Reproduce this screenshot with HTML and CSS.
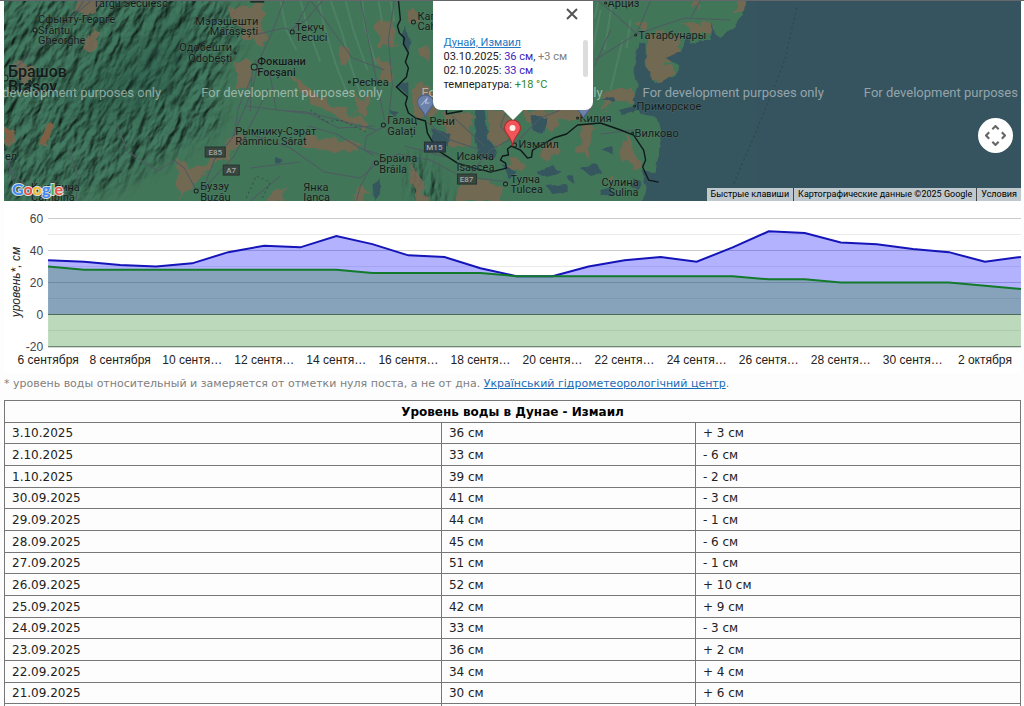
FILE: index.html
```html
<!DOCTYPE html>
<html lang="ru">
<head>
<meta charset="utf-8">
<title>Уровень воды в Дунае - Измаил</title>
<link rel="stylesheet" href="styles.css">
</head>
<body>
<main class="page">
  <section class="map" aria-label="Карта">
    <svg class="map-canvas" viewBox="4 1 1016 200" preserveAspectRatio="xMidYMid slice">
      <defs>
        <filter id="relief" x="-20%" y="-20%" width="140%" height="140%" color-interpolation-filters="sRGB">
          <feTurbulence type="fractalNoise" baseFrequency="0.11 0.045" numOctaves="4" seed="8" result="n"/>
          <feDiffuseLighting in="n" surfaceScale="4" diffuseConstant="1" lighting-color="#437c62" result="l"><feDistantLight azimuth="200" elevation="58"/></feDiffuseLighting>
          <feGaussianBlur in="SourceAlpha" stdDeviation="9" result="m"/>
          <feComposite in="l" in2="m" operator="in"/>
        </filter>
        <filter id="rough" x="-5%" y="-5%" width="110%" height="110%">
          <feTurbulence type="fractalNoise" baseFrequency="0.09" numOctaves="3" seed="4"/>
          <feDisplacementMap in="SourceGraphic" scale="13" xChannelSelector="R" yChannelSelector="G"/>
        </filter>
        <filter id="coast" x="-5%" y="-5%" width="110%" height="110%">
          <feTurbulence type="fractalNoise" baseFrequency="0.1" numOctaves="2" seed="2"/>
          <feDisplacementMap in="SourceGraphic" scale="5" xChannelSelector="R" yChannelSelector="G"/>
        </filter>
        <filter id="soft" x="-20%" y="-20%" width="140%" height="140%"><feGaussianBlur stdDeviation="12"/></filter>
      </defs>
      <rect class="land" x="4" y="0" width="1016" height="202"/>
      <g class="ridges">
        <path d="M300 0l8 30 12 32M318 0l6 26 12 40 12 30M330 0l12 34 8 30 10 30M345 0l8 30 14 40M362 0l2 25 12 40M280 0l6 30 10 20M378 0l4 24M390 0l4 22M600 10l-10 50 -6 35M612 0l-8 50M622 40l-12 50M630 20l-4 28M598 0l-4 18"/>
      </g>
      <g transform="rotate(28 110 100)">
        <path filter="url(#relief)" d="M-60 70L-20-60H110L196-30 200 40 222 70 190 122 160 170 130 200 40 250H-20Z"/>
      </g>
      <path filter="url(#relief)" d="M408 158L424 162 438 184 450 205H414Z"/>
      <path class="shade" filter="url(#soft)" d="M110 60L190 10 180 90 130 120 60 110Z"/>
      <g class="field" filter="url(#rough)">
        <path d="M78 0H106L88 16 72 10ZM92 28L100 32 94 50 82 52ZM14 62L34 66 32 80 16 78ZM48 122L54 126 44 146 40 144ZM4 126L14 128 12 146 4 142ZM226 8L262 4 266 46 244 38ZM234 62L254 60 250 84 238 90ZM176 160L190 168 210 162 232 138 240 134 242 142 222 162 204 172 192 190 178 198ZM376 22L394 20 396 46 378 46ZM341 46L350 48 348 66 340 64ZM378 58L392 64 390 82 381 76ZM286 74L304 84 330 104 352 112 368 124 362 130 338 118 310 102ZM306 134L332 140 360 142 356 150 322 152 300 148ZM354 94L370 100 364 118 356 112ZM276 190L286 188 280 201 266 201ZM358 188L368 192 362 201 354 200ZM412 84L432 86 438 112 420 118 412 106ZM442 112L472 114 468 148 448 146ZM486 110L508 112 510 136 500 148 489 140ZM524 112L592 108 574 120 560 120 552 134 544 126 532 132ZM540 148L554 142 558 152 546 162 538 158ZM582 124L594 128 588 158 578 152ZM624 138L634 148 640 168 626 164 618 156ZM602 92L632 86 634 104 616 100 602 110ZM646 32L678 34 682 52 664 62 676 72 660 84 648 76ZM682 22L712 24 710 34 692 34ZM692 0H700L698 10 691 9ZM736 0H748L740 14 733 14ZM636 22L646 22 644 32 637 30ZM512 158L526 164 522 174 508 170ZM462 182L486 180 504 188 500 201H456ZM410 164L418 174 428 201H418L410 182ZM606 178L616 176 610 188ZM404 10L416 8 420 20 410 28ZM418 48L428 48 428 60 420 58Z"/>
      </g>
      <g class="hill"><path d="M50 122l4 3-5 12-8 9-1-6zM6 128l7 4-4 12-4-4z"/></g>
      <path class="water" filter="url(#coast)" d="M750-10L742 14 734 26 720 38 714 34 712 22 710 40 700 40 690 44 688 36 680 52 665 58 679 66 676 74 660 83 651 79 645 62 645 43 638 43 633 70 637 84 633 100 640 114 657 117 661 133 655 173 641 170 645 186 640 212H1040V-10Z"/>
      <rect class="sea" x="756" y="0" width="264" height="202"/>
      <g class="water" filter="url(#coast)">
        <path d="M476 108L484 109 488 140 497 152 492 161 478 158 474 140ZM431 128L450 134 448 146 432 144ZM530 116L547 118 542 134 532 130ZM404 24L410 40 408 52 403 44ZM396 86L408 82 408 96ZM372 186L379 178 380 192 374 201ZM274 157L284 160 276 164ZM502 164l14 8-8 8zM536 172l18-6 6 6-14 4zM546 186l20-2 0 8-14 2zM580 168l14-4 8 8-12 4zM600 190l8-2 6 6-14 2zM618 110l16-4 4 4-16 4zM566 176l6-2 2 10-6-4zM600 150l12-4 0 8zM634 178l8 4-4 8-8-4zM602 100l10-4 2 4zM388 110l10 2-4 6z"/>
      </g>
      <g class="roads">
        <path d="M4 78L38 48 58 32 78 10 84 0M70 150L78 178 76 201M8 160L14 176 34 190M92 0L78 12M116 125L128 152 158 171 174 160 184 168 196 190 204 186 214 160 232 138 242 114 252 90 258 62 272 32 284 0M252 68L250 112M258 34L284 28 290 30 306 20 326 -4M292 32L310 0M254 60L270 76 276 110 306 112 330 118 376 130M234 136L238 108 252 76M204 188L234 156 258 110 268 88M246 106L310 114 338 128 374 126M308 126L336 134 374 156M250 134L290 148 324 172 360 178 376 164M388 122L392 84 388 40 394 0M360 0L372 60 384 120M310 0L352 58 384 70M374 160L360 186 356 201M376 164L398 154 430 160 460 176 508 182M404 146L450 158M388 124L366 136 364 150 378 154M426 122L450 140 480 150M452 116L484 146M506 110L500 126 512 140M514 144L540 118 560 110M594 60L636 34 650 0M636 34L614 14 596 0M636 34L684 18 730 20M600 134L634 130M470 174L490 150 512 138M594 66L610 30M700 0L690 18M4 150L14 184M280 176L250 201M250 168L300 162"/>
      </g>
      <g class="border-minor"><path d="M310 110L326 122 340 120 366 132M246 198L256 176 270 182 262 198M796 8L784 60 756 130 732 186"/></g>
      <path class="border" d="M398 0L400 20 397 26 399 33 404 38 403 44 408 53 405 62 408 68 406 77 396 87 407 97 405 104 408 113 415 118 425 121 427 133 437 150 457 163 474 168 490 172 506 168 505 163 500 160 502 156 508 155 507 149 511 146 520 150 527 158 531 157 532 150 553 138 566 134 577 125 600 123 620 130 633 135 643 150 645 160 642 167 648 180 658 182M446 110V114L462 111M250 2H264"/>
      <g class="shields">
        <rect x="205" y="147" width="20" height="10"/><rect x="223" y="165" width="16" height="10"/><rect x="457" y="174" width="19" height="10"/><rect class="blue" x="424" y="142" width="21" height="10"/>
        <text x="215" y="155">E85</text><text x="231" y="173">A7</text><text x="466" y="182">E87</text><text x="434" y="150">M15</text>
      </g>
      <g class="dots"><circle cx="35" cy="30" r="2"/><circle cx="254" cy="67" r="3"/><circle cx="292" cy="32" r="2"/><circle cx="413" cy="22" r="2"/><circle cx="383" cy="125" r="2"/><circle cx="376" cy="163" r="2"/><circle cx="196" cy="191" r="2"/><circle cx="505" cy="184" r="2"/><circle cx="514" cy="145" r="2"/><circle cx="605" cy="3" r="1"/><circle cx="635" cy="35" r="1"/><circle cx="634" cy="106" r="1"/><circle cx="632" cy="133" r="1"/><circle cx="577" cy="118" r="1"/><circle cx="349" cy="82" r="1"/><circle cx="235" cy="53" r="1"/><circle cx="5" cy="78" r="3"/></g>
      <g class="places">
        <text x="93" y="7">Târgu Secuiesc</text>
        <text x="38" y="23">Сфынту-Георге</text><text x="38" y="34">Sfântu</text><text x="38" y="44">Gheorghe</text>
        <text class="end" x="258" y="25">Мэрэшешти</text><text class="end" x="258" y="35">Mărășești</text>
        <text class="end" x="232" y="51">Одобешти</text><text class="end" x="232" y="62">Odobești</text>
        <text class="city" x="8" y="77">Брашов</text><text class="city" x="8" y="92">Brașov</text>
        <text x="5" y="160">ел</text><text x="31" y="191">Кымпина</text><text x="31" y="201">Câmpina</text>
        <text x="295" y="31">Текуч</text><text x="295" y="41">Tecuci</text>
        <text class="town" x="257" y="65">Фокшани</text><text class="town" x="257" y="76">Focșani</text>
        <text x="352" y="86">Pechea</text>
        <text x="235" y="135">Рымнику-Сэрат</text><text x="235" y="145">Râmnicu Sărat</text>
        <text x="200" y="190">Бузэу</text><text x="200" y="201">Buzău</text>
        <text x="303" y="191">Янка</text><text x="303" y="201">Ianca</text>
        <text x="387" y="124">Галац</text><text x="387" y="135">Galați</text>
        <text x="379" y="162">Браила</text><text x="379" y="173">Brăila</text>
        <text x="417" y="20">Кагул</text><text x="417" y="30">Cahul</text>
        <text x="429" y="125">Рени</text><text x="456" y="160">Исакча</text><text x="456" y="171">Isaccea</text>
        <text x="510" y="183">Тулча</text><text x="510" y="193">Tulcea</text>
        <text x="518" y="148">Измаил</text><text x="579" y="122">Килия</text>
        <text x="607" y="7">Арциз</text><text x="638" y="39">Татарбунары</text><text x="636" y="110">Приморское</text><text x="634" y="137">Вилково</text>
        <text class="end" x="638" y="186">Сулина</text><text class="end" x="638" y="196">Sulina</text>
      </g>
      <g class="watermark"><text x="-20" y="97">For development purposes only</text><text x="201" y="97">For development purposes only</text><text x="421" y="97">For development purposes only</text><text x="642" y="97">For development purposes only</text><text x="863" y="97">For development purposes only</text></g>
      <g class="pin-blue"><path d="M425 117C423 109 417 108 417 102A8 7 0 0 1 433 102C433 108 427 109 425 117Z"/><path d="M583 118C581 113 577 112 576 106H590C589 112 585 113 583 118Z"/></g>
      <path class="bolt" d="M421 105L427 98 425 103 429 103"/>
      <path class="pin-red" d="M512 146C511 136 504 134 504 128A8 8 0 0 1 520 128C520 134 513 136 512 146Z"/>
      <circle class="pin-eye" cx="512" cy="128" r="3"/>
      <text class="logo" x="12" y="195"><tspan class="g-blue">G</tspan><tspan class="g-red">o</tspan><tspan class="g-yellow">o</tspan><tspan class="g-blue">g</tspan><tspan class="g-green">l</tspan><tspan class="g-red">e</tspan></text>
    </svg>
    <div class="info">
      <button class="info-close" type="button" aria-label="Закрыть"><svg viewBox="0 0 12 12"><path d="M1 1L11 11M11 1L1 11"/></svg></button>
      <div class="info-text">
        <a href="#izmail">Дунай, Измаил</a>
        <div>03.10.2025: <span class="level">36 см</span>, <span class="delta">+3 см</span></div>
        <div>02.10.2025: <span class="level">33 см</span></div>
        <div>температура: <span class="temp">+18 °C</span></div>
      </div>
      <span class="info-scroll"></span>
    </div>
    <button class="pan" type="button" aria-label="Управление камерой"><svg viewBox="0 0 20 20"><path d="M7 4L10 1 13 4M7 16L10 19 13 16M4 7L1 10 4 13M16 7L19 10 16 13"/></svg></button>
    <div class="credits"><button type="button">Быстрые клавиши</button><span>Картографические данные ©2025 Google</span><a href="#terms">Условия</a></div>
  </section>

  <svg class="chart" viewBox="4 201 1016 172" role="img" aria-label="График уровня воды">
    <path class="grid-minor" d="M48 234.500H1020M48 266.500H1020M48 298.500H1020M48 330.500H1020"/>
    <path class="grid-major" d="M48 218.500H1020M48 250.500H1020M48 282.500H1020"/>
    <path class="area-blue" d="M48 314.500V260.100L84 261.700 120 264.900 156 266.500 192 263.300 228 252.100 264 245.700 300 247.300 336 236.100 372 244.100 408 255.300 444 256.900 480 268.100 516 276.100 552 276.100 588 266.500 624 260.100 660 256.900 696 261.700 732 247.300 768 231.300 804 232.900 840 242.500 876 244.100 912 248.900 948 252.100 984 261.700 1020 256.900V314.500Z"/>
    <path class="area-green" d="M48 346.500V266.500L84 269.700H336L372 272.900H480L516 276.100H732L768 279.300H804L840 282.500H948L984 285.700 1020 288.900V346.500Z"/>
    <path class="axis" d="M48 314.500H1020M48 346.500H1020"/>
    <path class="line-blue" d="M48 260.100L84 261.700 120 264.900 156 266.500 192 263.300 228 252.100 264 245.700 300 247.300 336 236.100 372 244.100 408 255.300 444 256.900 480 268.100 516 276.100 552 276.100 588 266.500 624 260.100 660 256.900 696 261.700 732 247.300 768 231.300 804 232.900 840 242.500 876 244.100 912 248.900 948 252.100 984 261.700 1020 256.900"/>
    <path class="line-green" d="M48 266.500L84 269.700H336L372 272.900H480L516 276.100H732L768 279.300H804L840 282.500H948L984 285.700 1020 288.900"/>
    <g class="y-labels"><text x="43" y="223">60</text><text x="43" y="255">40</text><text x="43" y="287">20</text><text x="43" y="319">0</text><text x="43" y="351">-20</text></g>
    <text class="y-title" transform="translate(20 282) rotate(-90)">уровень*, см</text>
    <g class="x-labels"><text x="48" y="364">6 сентября</text><text x="120" y="364">8 сентября</text><text x="192" y="364">10 сентя…</text><text x="264" y="364">12 сентя…</text><text x="336" y="364">14 сентя…</text><text x="408" y="364">16 сентя…</text><text x="480" y="364">18 сентя…</text><text x="552" y="364">20 сентя…</text><text x="624" y="364">22 сентя…</text><text x="696" y="364">24 сентя…</text><text x="768" y="364">26 сентя…</text><text x="840" y="364">28 сентя…</text><text x="912" y="364">30 сентя…</text><text x="984" y="364">2 октября</text></g>
  </svg>

  <p class="note">* уровень воды относительный и замеряется от отметки нуля поста, а не от дна. <a href="#center">Український гідрометеорологічний центр</a>.</p>

  <table class="levels" id="izmail">
    <colgroup><col class="col-date"><col class="col-level"><col></colgroup>
    <thead><tr><th colspan="3">Уровень воды в Дунае - Измаил</th></tr></thead>
    <tbody>
      <tr><td>3.10.2025</td><td>36 см</td><td>+ 3 см</td></tr>
      <tr><td>2.10.2025</td><td>33 см</td><td>- 6 см</td></tr>
      <tr><td>1.10.2025</td><td>39 см</td><td>- 2 см</td></tr>
      <tr><td>30.09.2025</td><td>41 см</td><td>- 3 см</td></tr>
      <tr><td>29.09.2025</td><td>44 см</td><td>- 1 см</td></tr>
      <tr><td>28.09.2025</td><td>45 см</td><td>- 6 см</td></tr>
      <tr><td>27.09.2025</td><td>51 см</td><td>- 1 см</td></tr>
      <tr><td>26.09.2025</td><td>52 см</td><td>+ 10 см</td></tr>
      <tr><td>25.09.2025</td><td>42 см</td><td>+ 9 см</td></tr>
      <tr><td>24.09.2025</td><td>33 см</td><td>- 3 см</td></tr>
      <tr><td>23.09.2025</td><td>36 см</td><td>+ 2 см</td></tr>
      <tr><td>22.09.2025</td><td>34 см</td><td>+ 4 см</td></tr>
      <tr><td>21.09.2025</td><td>30 см</td><td>+ 6 см</td></tr>
      <tr><td></td><td></td><td></td></tr>
    </tbody>
  </table>
</main>
</body>
</html>
```
FILE: styles.css
```css
* { box-sizing: border-box; }
body { margin: 0; border-top: 1px solid #64666a; background: #fdfdfd; color: #222; font-family: "DejaVu Sans", Verdana, sans-serif; font-size: 12px; }
.page { padding: 0 3px 0 4px; }

.map { position: relative; height: 200px; overflow: hidden; font-family: Roboto, sans-serif; }
.map-canvas { display: block; width: 100%; height: 100%; }
.land { fill: #427659; }
.ridges { fill: none; stroke: #5a8c70; stroke-width: 2; opacity: .5; }
.shade { fill: #1f4a3c; opacity: .3; }
.field { fill: #786852; opacity: .9; }
.hill { fill: #805f42; }
.water, .sea { fill: #36545f; }
.roads { fill: none; stroke: #4e5b62; stroke-width: 1; }
.border-minor { fill: none; stroke: #263c39; stroke-width: 1; stroke-dasharray: 2 3; opacity: .6; }
.border { fill: none; stroke: #10191a; stroke-width: 1.4; stroke-linejoin: round; }
.shields rect { fill: #3a4740; stroke: #28342e; }
.shields .blue { fill: #2e4254; }
.shields text { fill: #a3a8a3; font-size: 8px; font-weight: 500; text-anchor: middle; }
.dots { fill: #4d7963; stroke: #18211e; stroke-width: 1; }
.places { fill: #151b1a; stroke: #6a8a78; stroke-opacity: .4; stroke-width: 1; paint-order: stroke; font-size: 11px; }
.places .end { text-anchor: end; }
.places .city { font-size: 16px; font-weight: 500; }
.places .town { font-weight: 500; font-size: 11px; }
.watermark { fill: #fff; fill-opacity: .48; font-size: 13px; }
.pin-blue { fill: #6d82aa; stroke: #49608a; }
.bolt { fill: none; stroke: #b3c4e4; }
.pin-red { fill: #f0555a; stroke: #a92c2c; }
.pin-eye { fill: #fff0e8; }
.logo { font-family: Lato, sans-serif; font-size: 16px; font-weight: 700; stroke: #fff; stroke-width: 2; stroke-opacity: .8; paint-order: stroke; }
.g-blue { fill: #4285f4; }
.g-red { fill: #ea5348; }
.g-yellow { fill: #f4b928; }
.g-green { fill: #45aa60; }

.info { position: absolute; top: 0; left: 50%; width: 160px; height: 109px; margin-left: -80px; background: #fff; border-radius: 0 0 8px 8px; }
.info::after { content: ""; position: absolute; top: 100%; left: 70px; border: 10px solid transparent; border-top-color: #fff; border-bottom: 0; }
.info-close { position: absolute; top: 4px; right: 12px; width: 18px; height: 18px; padding: 3px; border: 0; background: none; }
.info-close svg { display: block; width: 12px; height: 12px; fill: none; stroke: #555; stroke-width: 2; }
.info-text { padding: 35px 0 0 11px; font-size: 11px; line-height: 14px; color: #222; white-space: nowrap; }
.info-text a { color: #2478c4; }
.level { color: #3a22c4; }
.delta { color: #808080; }
.temp { color: #2b862b; }
.info-scroll { position: absolute; top: 39px; right: 5px; width: 5px; height: 37px; border-radius: 3px; background: #dcdcdc; }

.pan { position: absolute; right: 8px; top: 117px; width: 35px; height: 35px; padding: 7px; border: 0; border-radius: 50%; background: #fff; }
.pan svg { display: block; width: 21px; height: 21px; fill: none; stroke: #666; stroke-width: 2; }
.credits { position: absolute; right: 0; bottom: 0; display: flex; height: 13px; background: #bfc8cc; font-size: 9px; line-height: 13px; color: #000; }
.credits > * { padding: 0 4px; border: 0; background: none; font: inherit; line-height: 13px; color: inherit; text-decoration: none; white-space: nowrap; }
.credits > * + * { border-left: 1px solid #444; }

.chart { display: block; width: 100%; height: auto; font-family: "Liberation Sans", Arial, sans-serif; font-size: 12px; background: #fff; }
.grid-minor { stroke: #ebebeb; }
.grid-major { stroke: #ccc; }
.axis { stroke: #4f6a58; }
.area-blue { fill: #00f; fill-opacity: .3; }
.area-green { fill: #23821e; fill-opacity: .3; }
.line-blue, .line-green { fill: none; stroke-width: 2; }
.line-blue { stroke: #1414b8; }
.line-green { stroke: #127a2a; }
.y-labels { fill: #444; text-anchor: end; }
.y-title { fill: #222; font-style: italic; text-anchor: middle; }
.x-labels { fill: #222; text-anchor: middle; }

.note { margin: 0; padding: 4px 0 11px; font-size: 11px; line-height: 14px; color: #808080; }
.note a { color: #1a6bb5; }

.levels { width: 100%; table-layout: fixed; border-collapse: collapse; margin-top: -2px; color: #222; }
.col-date { width: 43%; }
.col-level { width: 25%; }
.levels th, .levels td { height: 22px; padding: 0 7px; border: 1px solid #777; line-height: 20px; text-align: left; }
.levels tbody tr:nth-child(3n + 1) td { height: 21px; }
.levels th { text-align: center; color: #000; }
```
